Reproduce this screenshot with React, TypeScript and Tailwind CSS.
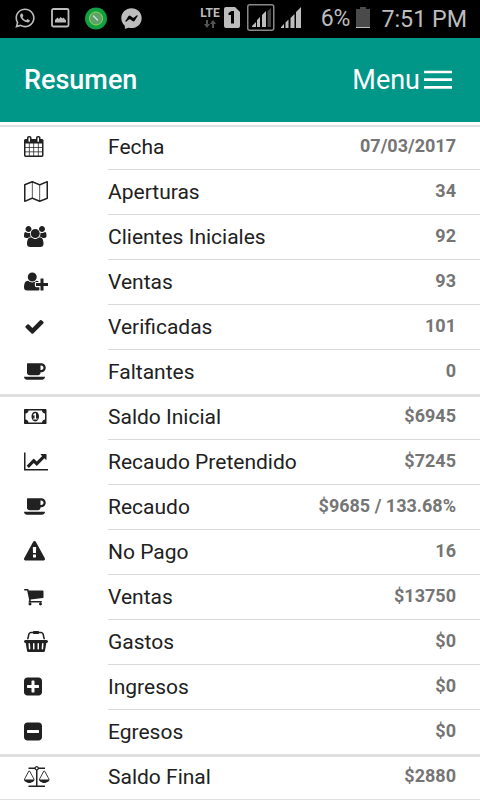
import { FaFacebookMessenger, FaWhatsapp } from "react-icons/fa";

type Icon = { w: number; x?: number; d: string };

// every glyph sits on a 1792 unit em, w is how wide it is
const icons: Record<string, Icon> = {
  calendar: {
    x: 64,
    w: 1664,
    d: "M192 1664h288v-288h-288v288zm352 0h320v-288h-320v288zm-352-352h288v-320h-288v320zm352 0h320v-320h-320v320zm-352-384h288v-288h-288v288zm736 736h320v-288h-320v288zm-384-736h320v-288h-320v288zm768 736h288v-288h-288v288zm-384-352h320v-320h-320v320zm-352-864v-288q0-13-9.5-22.5t-22.5-9.5h-64q-13 0-22.5 9.5t-9.5 22.5v288q0 13 9.5 22.5t22.5 9.5h64q13 0 22.5-9.5t9.5-22.5zm736 864h288v-320h-288v320zm-384-384h320v-288h-320v288zm384 0h288v-288h-288v288zm32-480v-288q0-13-9.5-22.5t-22.5-9.5h-64q-13 0-22.5 9.5t-9.5 22.5v288q0 13 9.5 22.5t22.5 9.5h64q13 0 22.5-9.5t9.5-22.5zm384-64v1280q0 52-38 90t-90 38h-1408q-52 0-90-38t-38-90v-1280q0-52 38-90t90-38h128v-96q0-66 47-113t113-47h64q66 0 113 47t47 113v96h384v-96q0-66 47-113t113-47h64q66 0 113 47t47 113v96h128q52 0 90 38t38 90z",
  },
  map: {
    w: 2048,
    d: "M2020 11q28 20 28 53v1408q0 20-11 36t-29 23l-640 256q-24 11-48 0l-616-246-616 246q-10 5-24 5-19 0-36-11-28-20-28-53v-1408q0-20 11-36t29-23l640-256q24-11 48 0l616 246 616-246q32-13 60 6zM736 146v1270l576 230v-1270zM128 363v1270l544-217v-1270zM1920 1429v-1270l-544 217v1270z",
  },
  users: {
    w: 1920,
    d: "M593 896q-162 5-265 128h-134q-82 0-138-40.5t-56-118.5q0-353 124-353 6 0 43.5 21t97.5 42.5 119 21.5q67 0 133-23-5 37-5 66 0 159 81 256zm1071 637q0 120-73 189.5t-194 69.5h-874q-121 0-194-69.5t-73-189.5q0-53 3.5-103.5t14-109 26.5-108.5 43-97.5 62-81 85.5-53.5 111.5-20q10 0 43 21.5t73 48 107 48 135 21.5 135-21.5 107-48 73-48 43-21.5q61 0 111.5 20t85.5 53.5 62 81 43 97.5 26.5 108.5 14 109 3.5 103.5zm-1024-1277q0 106-75 181t-181 75-181-75-75-181 75-181 181-75 181 75 75 181zm704 384q0 159-112.5 271.5t-271.5 112.5-271.5-112.5-112.5-271.5 112.5-271.5 271.5-112.5 271.5 112.5 112.5 271.5zm576 225q0 78-56 118.5t-138 40.5h-134q-103-123-265-128 81-97 81-256 0-29-5-66 66 23 133 23 59 0 119-21.5t97.5-42.5 43.5-21q124 0 124 353zm-128-609q0 106-75 181t-181 75-181-75-75-181 75-181 181-75 181 75 75 181z",
  },
  userPlus: {
    w: 2048,
    d: "M704 896q-159 0-271.5-112.5t-112.5-271.5 112.5-271.5 271.5-112.5 271.5 112.5 112.5 271.5-112.5 271.5-271.5 112.5zm960 128h352q13 0 22.5 9.5t9.5 22.5v192q0 13-9.5 22.5t-22.5 9.5h-352v352q0 13-9.5 22.5t-22.5 9.5h-192q-13 0-22.5-9.5t-9.5-22.5v-352h-352q-13 0-22.5-9.5t-9.5-22.5v-192q0-13 9.5-22.5t22.5-9.5h352v-352q0-13 9.5-22.5t22.5-9.5h192q13 0 22.5 9.5t9.5 22.5v352zm-736 224q0 52 38 90t90 38h256v238q-68 50-171 50h-874q-121 0-194-69t-73-190q0-53 3.5-103.5t14-109 26.5-108.5 43-97.5 62-81 85.5-53.5 111.5-20q19 0 39 17 79 61 154.5 91.5t164.5 30.5 164.5-30.5 154.5-91.5q20-17 39-17 132 0 217 96h-223q-52 0-90 38t-38 90v192z",
  },
  check: {
    w: 1792,
    d: "M1671 566q0 40-28 68l-724 724-136 136q-28 28-68 28t-68-28l-136-136-362-362q-28-28-28-68t28-68l136-136q28-28 68-28t68 28l294 295 656-657q28-28 68-28t68 28l136 136q28 28 28 68z",
  },
  coffee: {
    w: 1920,
    d: "M1664 576q0-80-56-136t-136-56h-64v384h64q80 0 136-56t56-136zm-1664 768h1792q0 106-75 181t-181 75h-1280q-106 0-181-75t-75-181zm1856-768q0 159-112.5 271.5t-271.5 112.5h-64v32q0 92-66 158t-158 66h-704q-92 0-158-66t-66-158v-736q0-26 19-45t45-19h1152q159 0 271.5 112.5t112.5 271.5z",
  },
  money: {
    w: 1920,
    d: "M768 1152h384v-96h-128v-448h-114l-148 137 77 80q42-37 55-57h2v288h-128v96zm512-256q0 70-21 142t-59.5 134-101.5 101-138 39-138-39-101.5-101-59.5-134-21-142 21-142 59.5-134 101.5-101 138-39 138 39 101.5 101 59.5 134 21 142zm512 256v-512q-106 0-181-75t-75-181h-1152q0 106-75 181t-181 75v512q106 0 181 75t75 181h1152q0-106 75-181t181-75zm128-832v1152q0 26-19 45t-45 19h-1792q-26 0-45-19t-19-45v-1152q0-26 19-45t45-19h1792q26 0 45 19t19 45z",
  },
  chart: {
    w: 2048,
    d: "M2048 1536v128h-2048v-1536h128v1408h1920zm-128-1248v435q0 21-19.5 29.5t-35.5-7.5l-121-121-633 633q-10 10-23 10t-23-10l-233-233-416 416-192-192 585-585q10-10 23-10t23 10l233 233 464-464-121-121q-16-16-7.5-35.5t29.5-19.5h435q14 0 23 9t9 23z",
  },
  warning: {
    w: 1792,
    d: "M1024 1375v-190q0-14-9.5-23.5t-22.5-9.5h-192q-13 0-22.5 9.5t-9.5 23.5v190q0 14 9.5 23.5t22.5 9.5h192q13 0 22.5-9.5t9.5-23.5zm-2-374l18-459q0-12-10-19-13-11-24-11h-220q-11 0-24 11-10 7-10 21l17 457q0 10 10 16.5t24 6.5h185q14 0 23.5-6.5t10.5-16.5zm-14-934l768 1408q35 63-2 126-17 29-46.5 46t-63.5 17h-1536q-34 0-63.5-17t-46.5-46q-37-63-2-126l768-1408q17-31 47-49t65-18 65 18 47 49z",
  },
  cart: {
    x: 64,
    w: 1664,
    d: "M704 1536q0 52-38 90t-90 38-90-38-38-90 38-90 90-38 90 38 38 90zm896 0q0 52-38 90t-90 38-90-38-38-90 38-90 90-38 90 38 38 90zm128-1088v512q0 24-16.5 42.5t-40.5 21.5l-1044 122q13 60 13 70 0 16-24 64h920q26 0 45 19t19 45-19 45-45 19h-1024q-26 0-45-19t-19-45q0-11 8-31.5t16-36 21.5-40 15.5-29.5l-177-823h-204q-26 0-45-19t-19-45 19-45 45-19h256q16 0 28.5 6.5t19.5 15.5 13 24.5 8 26 5.5 29.5 4.5 26h1201q26 0 45 19t19 45z",
  },
  basket: {
    w: 2048,
    d: "M1920 768q53 0 90.5 37.5t37.5 90.5-37.5 90.5-90.5 37.5h-15l-115 662q-8 46-44 76t-82 30h-1280q-46 0-82-30t-44-76l-115-662h-15q-53 0-90.5-37.5t-37.5-90.5 37.5-90.5 90.5-37.5h1792zm-1435 800q26-2 43.5-22.5t15.5-46.5l-32-416q-2-26-22.5-43.5t-46.5-15.5-43.5 22.5-15.5 46.5l32 416q2 25 20.5 42t43.5 17h5zm411-64v-416q0-26-19-45t-45-19-45 19-19 45v416q0 26 19 45t45 19 45-19 19-45zm384 0v-416q0-26-19-45t-45-19-45 19-19 45v416q0 26 19 45t45 19 45-19 19-45zm352 5l32-416q2-26-15.5-46.5t-43.5-22.5-46.5 15.5-22.5 43.5l-32 416q-2 26 15.5 46.5t43.5 22.5h5q25 0 43.5-17t20.5-42zm-1156-1217l-93 412h-132l101-441q19-88 89-143.5t160-55.5h167q0-26 19-45t45-19h384q26 0 45 19t19 45h167q90 0 160 55.5t89 143.5l101 441h-132l-93-412q-11-44-45.5-72t-79.5-28h-167q0 26-19 45t-45 19h-384q-26 0-45-19t-19-45h-167q-45 0-79.5 28t-45.5 72z",
  },
  plus: {
    x: 128,
    w: 1536,
    d: "M1408 960v-128q0-26-19-45t-45-19h-320v-320q0-26-19-45t-45-19h-128q-26 0-45 19t-19 45v320h-320q-26 0-45 19t-19 45v128q0 26 19 45t45 19h320v320q0 26 19 45t45 19h128q26 0 45-19t19-45v-320h320q26 0 45-19t19-45zm256-544v960q0 119-84.5 203.5t-203.5 84.5h-960q-119 0-203.5-84.5t-84.5-203.5v-960q0-119 84.5-203.5t203.5-84.5h960q119 0 203.5 84.5t84.5 203.5z",
  },
  minus: {
    x: 128,
    w: 1536,
    d: "M1408 960v-128q0-26-19-45t-45-19h-896q-26 0-45 19t-19 45v128q0 26 19 45t45 19h896q26 0 45-19t19-45zm256-544v960q0 119-84.5 203.5t-203.5 84.5h-960q-119 0-203.5-84.5t-84.5-203.5v-960q0-119 84.5-203.5t203.5-84.5h960q119 0 203.5 84.5t84.5 203.5z",
  },
  scale: {
    w: 2176,
    d: "M1728 448l-384 704h768zm-1280 0l-384 704h768zm821-192q-14 40-45.5 71.5t-71.5 45.5v1291h608q14 0 23 9t9 23v64q0 14-9 23t-23 9h-1344q-14 0-23-9t-9-23v-64q0-14 9-23t23-9h608v-1291q-40-14-71.5-45.5t-45.5-71.5h-491q-14 0-23-9t-9-23v-64q0-14 9-23t23-9h491q21-57 70-92.5t111-35.5 111 35.5 70 92.5h491q14 0 23 9t9 23v64q0 14-9 23t-23 9h-491zm-181 16q33 0 56.5-23.5t23.5-56.5-23.5-56.5-56.5-23.5-56.5 23.5-23.5 56.5 23.5 56.5 56.5 23.5zm1088 880q0 73-46.5 131t-117.5 91-144.5 49.5-139.5 16.5-139.5-16.5-144.5-49.5-117.5-91-46.5-131q0-11 35-81t92-174.5 107-195.5 102-184 56-100q18-33 56-33t56 33q4 7 56 100t102 184 107 195.5 92 174.5 35 81zm-1280 0q0 73-46.5 131t-117.5 91-144.5 49.5-139.5 16.5-139.5-16.5-144.5-49.5-117.5-91-46.5-131q0-11 35-81t92-174.5 107-195.5 102-184 56-100q18-33 56-33t56 33q4 7 56 100t102 184 107 195.5 92 174.5 35 81z",
  },
};

const groups = [
  [
    { icon: "calendar", label: "Fecha", value: "07/03/2017" },
    { icon: "map", label: "Aperturas", value: "34" },
    { icon: "users", label: "Clientes Iniciales", value: "92" },
    { icon: "userPlus", label: "Ventas", value: "93" },
    { icon: "check", label: "Verificadas", value: "101" },
    { icon: "coffee", label: "Faltantes", value: "0" },
  ],
  [
    { icon: "money", label: "Saldo Inicial", value: "$6945" },
    { icon: "chart", label: "Recaudo Pretendido", value: "$7245" },
    { icon: "coffee", label: "Recaudo", value: "$9685 / 133.68%" },
    { icon: "warning", label: "No Pago", value: "16" },
    { icon: "cart", label: "Ventas", value: "$13750" },
    { icon: "basket", label: "Gastos", value: "$0" },
    { icon: "plus", label: "Ingresos", value: "$0" },
    { icon: "minus", label: "Egresos", value: "$0" },
  ],
  [{ icon: "scale", label: "Saldo Final", value: "$2880" }],
];

function RowIcon({ name }: { name: string }) {
  const { x = 0, w, d } = icons[name];
  return (
    <svg
      viewBox={`${x} 0 ${w} 1792`}
      width={(w * 21) / 1792}
      height={21}
      className="block fill-[#212121]"
    >
      <path d={d} />
    </svg>
  );
}

function StatusBar() {
  return (
    <div className="h-[38px] bg-black flex items-center justify-between pl-[14px] pr-[13px] text-[#bdbdbd]">
      <div className="flex items-center pb-[2px]">
        <FaWhatsapp size={22} />
        <svg width="19" height="20" viewBox="0 0 19 20" className="ml-[15px]">
          <rect x="1" y="1" width="16.5" height="17.5" rx="1.5" fill="none" stroke="currentColor" strokeWidth="1.8" />
          <path d="M4 14.500v-2.500l2.500-2.500 1.500 1.500 1.500-2 2 1.500 1-1 2.500 3v2z" fill="currentColor" />
        </svg>
        <svg width="22" height="23" viewBox="0 0 22 23" className="ml-[15px]">
          <circle cx="11" cy="11.500" r="11" fill="#12a045" />
          <circle cx="11" cy="11.500" r="6.500" fill="#5fa06c" stroke="#8fdc4a" strokeWidth="1" />
          <path d="M8.500 9l4 4" stroke="#d5e8d5" strokeWidth="1.300" strokeLinecap="round" />
        </svg>
        <FaFacebookMessenger size={21} className="ml-[14px]" />
      </div>

      <div className="flex items-center">
        <div className="flex flex-col items-center pb-[3px]">
          <div className="text-[12px] leading-[12px] font-bold">LTE</div>
          <svg width="12" height="8" viewBox="0 0 12 8" className="mt-[1px] fill-[#555]">
            <path d="M2 0h2v4h2l-3 4-3-4h2zM8 8h2V4h2L9 0 6 4h2z" />
          </svg>
        </div>
        <svg width="17" height="22" viewBox="0 0 17 22" className="ml-[4px] mb-[2px]">
          <path d="M2 0h9l5 5v14a2 2 0 0 1-2 2H2a2 2 0 0 1-2-2V2a2 2 0 0 1 2-2z" fill="currentColor" />
          <path d="M7 16.500V8H4.500V6l3-2h2.500v12.500z" fill="#000" />
        </svg>
        <svg width="28" height="28" viewBox="0 0 28 28" className="ml-[6px] mb-[2px]">
          <rect x="0.750" y="0.750" width="26" height="25.500" rx="2" fill="none" stroke="#888" strokeWidth="1.500" />
          <path d="M5 23v-1l4-4v5zM10 23v-7l3-3v10zM15 23V11l4-4v16z" fill="currentColor" />
          <path d="M20.500 23V7l3.500-3v19z" fill="#444" />
        </svg>
        <svg width="20" height="22" viewBox="0 0 20 22" className="ml-[6px] mb-[3px]">
          <path d="M0 21v-1l3-3v4zM4.500 21v-5.500l3-3V21zM9.500 21V11l4-4v14zM15 21V5l5-5v21z" fill="currentColor" />
        </svg>
        <div className="ml-[20px] text-[23px] leading-[28px]">6%</div>
        <svg width="14" height="21" viewBox="0 0 14 21" className="ml-[6px] mb-[3px]">
          <path d="M0 2h4V0h6v2h4v19H0z" fill="#4a4a4a" />
          <path d="M0 20h14v1H0z" fill="#bdbdbd" />
        </svg>
        <div className="ml-[11px] text-[23.250px] leading-[28px]">7:51 PM</div>
      </div>
    </div>
  );
}

export default function App() {
  return (
    <div className="w-[480px] h-[800px] overflow-hidden bg-white font-['Roboto',sans-serif]">
      <StatusBar />

      <div className="h-[84px] bg-[#009688] text-white flex items-center justify-between pl-[24px] pr-[28px]">
        <div className="text-[27px] font-medium">Resumen</div>
        <div className="flex items-center text-[27px]">
          Menu
          <svg width="28" height="20" viewBox="0 0 28 20" className="ml-[4px]">
            <path d="M0 2h28M0 9.700h28M0 17.400h28" stroke="#fff" strokeWidth="2.700" />
          </svg>
        </div>
      </div>

      <div className="pt-[3px]">
        {groups.map((rows, g) => (
          <div
            key={g}
            className={`relative border-[#e0e0e0] ${g === 0 ? "border-t-2" : "-mt-px border-t-3"}`}
          >
            {rows.map((row, i) => (
              <div
                key={row.label}
                className={`flex pl-[24px] ${i === 0 ? "h-[43px]" : "h-[45px]"}`}
              >
                <div className="w-[84px] flex items-end pb-[13px]">
                  <RowIcon name={row.icon} />
                </div>
                <div
                  className={`flex-1 flex items-end justify-between pr-[24px] ${
                    i < rows.length - 1 ? "border-b border-[#d9d9d9]" : "pb-px"
                  }`}
                >
                  <div className="pb-[9px] text-[21px] leading-[26px] text-[#212121]">{row.label}</div>
                  <div className="pb-[10px] text-[18px] leading-[26px] font-bold text-[#757575]">{row.value}</div>
                </div>
              </div>
            ))}
          </div>
        ))}
        <div className="relative -mt-px h-[2px] bg-[#e0e0e0]"></div>
      </div>
    </div>
  );
}
